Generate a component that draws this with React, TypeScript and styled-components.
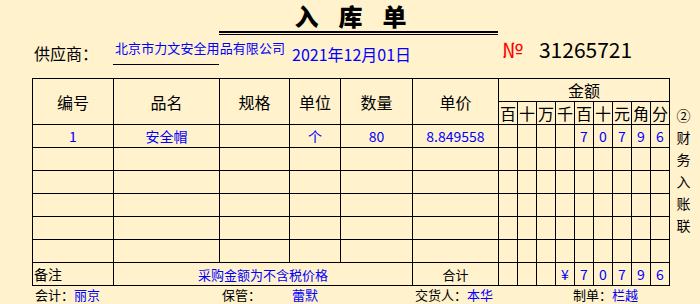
import React from "react";
import styled, { createGlobalStyle } from "styled-components";

// sheet columns, same as the excel form: margin | 编号 | 品名 | 规格 | 单位 | 数量 | 单价 | 9 money digits | side
const COLS = "32px 81px 106px 70px 51px 72px 86px repeat(9, 19px) 31px";

const BLUE = "#0000ff";

const GlobalStyle = createGlobalStyle`
  html, body {
    margin: 0;
    padding: 0;
    background: #fff2cc;
  }
  body {
    font-family: "Noto Sans CJK SC", "Noto Sans", sans-serif;
    color: #000;
  }
`;

const moneyHeads = ["百", "十", "万", "千", "百", "十", "元", "角", "分"];

const rows = [
  {
    no: "1",
    name: "安全帽",
    spec: "",
    unit: "个",
    qty: "80",
    price: "8.849558",
    money: ["", "", "", "", "7", "0", "7", "9", "6"],
  },
  ...Array.from({ length: 5 }, () => ({
    no: "",
    name: "",
    spec: "",
    unit: "",
    qty: "",
    price: "",
    money: Array(9).fill(""),
  })),
];

const total = ["", "", "", "¥", "7", "0", "7", "9", "6"];

const App = () => {
  return (
    <Page>
      <GlobalStyle />
      <Band $h={35}>
        <TitleBox>
          <TitleText>
            <span>入</span>
            <span>库</span>
            <span>单</span>
          </TitleText>
          <DoubleRule />
        </TitleBox>
      </Band>

      <Band $h={43}>
        <Label>供应商：</Label>
        <SupplierCell>
          <SupplierName>北京市力文安全用品有限公司</SupplierName>
        </SupplierCell>
        <DateText>2021年12月01日</DateText>
        <Serial>
          <NoMark>№</NoMark>
          <span>31265721</span>
        </Serial>
      </Band>

      <Main>
        <Sheet>
          <Cell $rows={2} $size={16}>编号</Cell>
          <Cell $rows={2} $size={16}>品名</Cell>
          <Cell $rows={2} $size={16}>规格</Cell>
          <Cell $rows={2} $size={16}>单位</Cell>
          <Cell $rows={2} $size={16}>数量</Cell>
          <Cell $rows={2} $size={16}>单价</Cell>
          <Cell $cols={9} $size={16}>金额</Cell>
          {moneyHeads.map((h, i) => (
            <Cell key={"h" + i} $size={16} $tight>
              {h}
            </Cell>
          ))}

          {rows.map((r, i) => (
            <React.Fragment key={i}>
              <Cell $blue>{r.no}</Cell>
              <Cell $blue>{r.name}</Cell>
              <Cell $blue>{r.spec}</Cell>
              <Cell $blue>{r.unit}</Cell>
              <Cell $blue>{r.qty}</Cell>
              <Cell $blue>{r.price}</Cell>
              {r.money.map((m, j) => (
                <Cell key={j} $blue $tight>
                  {m}
                </Cell>
              ))}
            </React.Fragment>
          ))}

          <Cell $align="flex-start">备注</Cell>
          <Cell $cols={4} $blue $size={13}>
            采购金额为不含税价格
          </Cell>
          <Cell $size={13}>合计</Cell>
          {total.map((m, j) => (
            <Cell key={"t" + j} $blue $tight>
              {m}
            </Cell>
          ))}
        </Sheet>

        <SideNote>
          <span>②</span>
          <span>财</span>
          <span>务</span>
          <span>入</span>
          <span>账</span>
          <span>联</span>
        </SideNote>
      </Main>

      <Band $h={18}>
        <Sign $col="2">
          会计：<Name>丽京</Name>
        </Sign>
        <Sign $col="4">保管：</Sign>
        <Sign $col="5">
          <Name>蕾默</Name>
        </Sign>
        <Sign $col="7 / 12">
          交货人：<Name>本华</Name>
        </Sign>
        <Sign $col="12 / 18" $shift={-4}>
          制单：<Name>栏越</Name>
        </Sign>
      </Band>
    </Page>
  );
};

export default App;

const Page = styled.div`
  width: 700px;
  height: 304px;
  overflow: hidden;
  background: #fff2cc;
`;

const Band = styled.div<{ $h: number }>`
  display: grid;
  grid-template-columns: ${COLS};
  height: ${(p) => p.$h}px;
`;

const TitleBox = styled.div`
  grid-column: 4 / 8;
  display: flex;
  flex-direction: column;
`;

const TitleText = styled.h1`
  margin: 0;
  height: 31px;
  display: flex;
  justify-content: center;
  align-items: center;
  gap: 20px;
  padding-right: 16px;
  font-size: 24px;
  line-height: 31px;
  font-weight: 900;
`;

const DoubleRule = styled.div`
  height: 1px;
  border-top: 2px solid #000;
  border-bottom: 1px solid #000;
`;

const Label = styled.div`
  grid-column: 2;
  font-size: 16px;
  line-height: 22px;
  padding: 7px 0 0 2px;
  white-space: nowrap;
`;

const SupplierCell = styled.div`
  grid-column: 3;
  min-width: 0;
  height: 30px;
  box-sizing: border-box;
  border-bottom: 1px solid #000;
  padding: 4px 0 0 2px;
`;

const SupplierName = styled.div`
  width: 170px;
  font-size: 13px;
  line-height: 18px;
  color: ${BLUE};
  white-space: nowrap;
  text-align: justify;
  text-align-last: justify;
  text-justify: inter-character;
`;

const DateText = styled.div`
  grid-column: 5 / 8;
  font-size: 16px;
  line-height: 22px;
  padding: 8px 0 0 3px;
  color: ${BLUE};
  white-space: nowrap;
`;

const Serial = styled.div`
  grid-column: 8 / 18;
  display: flex;
  align-items: center;
  gap: 16px;
  height: 28px;
  padding-left: 4px;
  font-size: 21px;
  white-space: nowrap;
`;

const NoMark = styled.span`
  color: #ff0000;
`;

const Main = styled.div`
  display: flex;
  align-items: flex-start;
  padding-left: 32px;
`;

const Sheet = styled.div`
  display: grid;
  grid-template-columns: 80px 105px 69px 50px 71px 85px repeat(9, 18px);
  grid-auto-rows: 22px;
  gap: 1px;
  background: #000;
  border: 1px solid #000;
`;

const Cell = styled.div<{
  $cols?: number;
  $rows?: number;
  $align?: string;
  $blue?: boolean;
  $size?: number;
  $tight?: boolean;
}>`
  grid-column: span ${(p) => p.$cols ?? 1};
  grid-row: span ${(p) => p.$rows ?? 1};
  display: flex;
  align-items: center;
  justify-content: ${(p) => p.$align ?? "center"};
  padding: 0 ${(p) => (p.$tight ? 0 : 1)}px;
  background: #fff2cc;
  color: ${(p) => (p.$blue ? BLUE : "#000")};
  font-size: ${(p) => p.$size ?? 14}px;
  white-space: nowrap;
  overflow: hidden;
`;

const SideNote = styled.div`
  flex: 0 0 31px;
  display: flex;
  flex-direction: column;
  align-items: center;
  padding: 26px 4px 0 0;
  box-sizing: border-box;
  font-size: 14px;
  line-height: 22px;
`;

const Sign = styled.div<{ $col: string; $shift?: number }>`
  grid-column: ${(p) => p.$col};
  padding-left: 3px;
  margin-left: ${(p) => p.$shift ?? 0}px;
  font-size: 13px;
  line-height: 18px;
  white-space: nowrap;
`;

const Name = styled.span`
  color: ${BLUE};
`;
